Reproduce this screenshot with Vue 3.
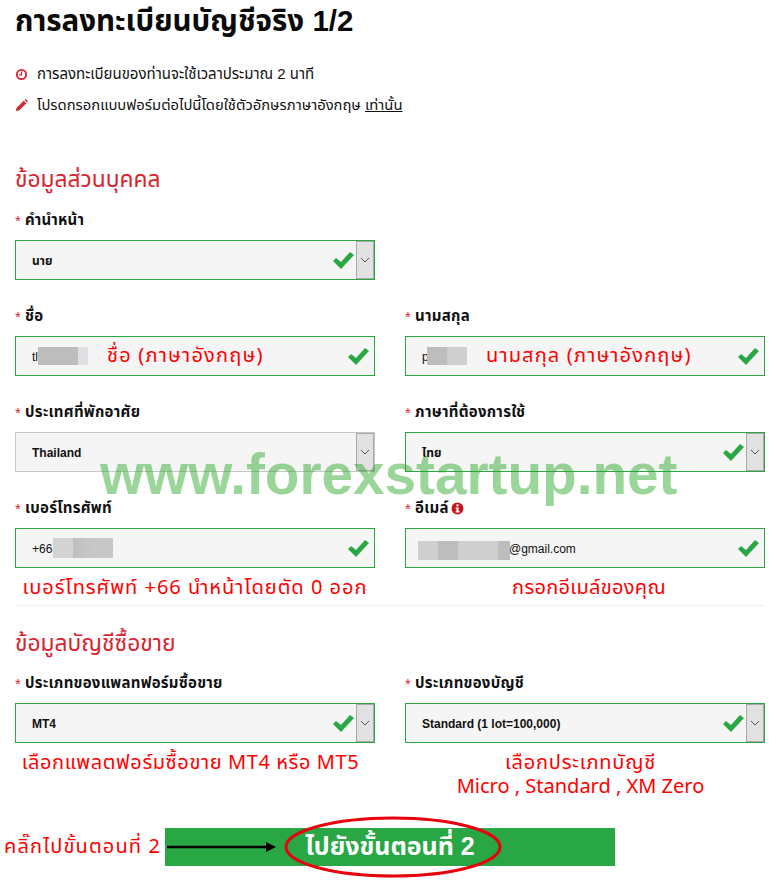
<script setup>
const check = 'M0 10 L3 7 L8 11 L17 1 L21 4 L8 18 Z'
</script>

<template>
  <div class="page">
    <h1 class="title">การลงทะเบียนบัญชีจริง 1/2</h1>

    <ul class="notes">
      <li>
        <svg class="note-icon" viewBox="0 0 14 14"><circle cx="7" cy="7" r="5" fill="none" stroke="#d9232e" stroke-width="2"/><path d="M7 3.8V7.4H4.4" fill="none" stroke="#d9232e" stroke-width="1.3"/></svg>
        <span>การลงทะเบียนของท่านจะใช้เวลาประมาณ 2 นาที</span>
      </li>
      <li class="tight">
        <svg class="note-icon" viewBox="0 0 14 14"><path d="M1 13 L1.6 9.6 L9.4 1.8 L12.2 4.6 L4.4 12.4 Z" fill="#d9232e"/><path d="M10.2 1 L11 .4 Q11.6 0 12.2 .5 L13.5 1.8 Q14 2.4 13.5 3 L13 3.8 Z" fill="#d9232e"/></svg>
        <span>โปรดกรอกแบบฟอร์มต่อไปนี้โดยใช้ตัวอักษรภาษาอังกฤษ <u>เท่านั้น</u></span>
      </li>
    </ul>

    <h2 class="section first">ข้อมูลส่วนบุคคล</h2>

    <div class="grid">
      <div class="field">
        <label><i>*</i> คำนำหน้า</label>
        <div class="box ok">
          <span class="val">นาย</span>
          <svg class="tick sel" viewBox="0 0 21 18"><path :d="check" fill="#2aa745"/></svg>
          <span class="arrow"><svg viewBox="0 0 10 6"><path d="M1 1 L5 5 L9 1" fill="none" stroke="#555" stroke-width="1"/></svg></span>
        </div>
      </div>
      <div></div>

      <div class="field">
        <label><i>*</i> ชื่อ</label>
        <div class="box ok">
          <span class="val plain">tl</span>
          <span class="blur b-first"></span>
          <span class="hint in-first">ชื่อ (ภาษาอังกฤษ)</span>
          <svg class="tick" viewBox="0 0 21 18"><path :d="check" fill="#2aa745"/></svg>
        </div>
      </div>
      <div class="field">
        <label><i>*</i> นามสกุล</label>
        <div class="box ok">
          <span class="val plain">p</span>
          <span class="blur b-last"></span>
          <span class="hint in-last">นามสกุล (ภาษาอังกฤษ)</span>
          <svg class="tick" viewBox="0 0 21 18"><path :d="check" fill="#2aa745"/></svg>
        </div>
      </div>

      <div class="field">
        <label><i>*</i> ประเทศที่พักอาศัย</label>
        <div class="box grey">
          <span class="val">Thailand</span>
          <span class="arrow"><svg viewBox="0 0 10 6"><path d="M1 1 L5 5 L9 1" fill="none" stroke="#555" stroke-width="1"/></svg></span>
        </div>
      </div>
      <div class="field">
        <label><i>*</i> ภาษาที่ต้องการใช้</label>
        <div class="box ok">
          <span class="val">ไทย</span>
          <svg class="tick sel" viewBox="0 0 21 18"><path :d="check" fill="#2aa745"/></svg>
          <span class="arrow"><svg viewBox="0 0 10 6"><path d="M1 1 L5 5 L9 1" fill="none" stroke="#555" stroke-width="1"/></svg></span>
        </div>
      </div>

      <div class="field">
        <label><i>*</i> เบอร์โทรศัพท์</label>
        <div class="box ok">
          <span class="val plain">+66</span>
          <span class="blur b-phone"></span>
          <svg class="tick" viewBox="0 0 21 18"><path :d="check" fill="#2aa745"/></svg>
        </div>
        <p class="hint below wide">เบอร์โทรศัพท์ +66 นำหน้าโดยตัด 0 ออก</p>
      </div>
      <div class="field">
        <label><i>*</i> อีเมล์ <svg class="info" viewBox="0 0 12 12"><circle cx="6" cy="6" r="5.5" fill="#c4161c"/><rect x="5" y="2.2" width="2" height="1.8" fill="#fff"/><path d="M4.2 5H7V8.6H8V9.8H4.2V8.6H5V6.2H4.2Z" fill="#fff"/></svg></label>
        <div class="box ok">
          <span class="blur b-mail"></span>
          <span class="val plain mail">@gmail.com</span>
          <svg class="tick" viewBox="0 0 21 18"><path :d="check" fill="#2aa745"/></svg>
        </div>
        <p class="hint below slight">กรอกอีเมล์ของคุณ</p>
      </div>
    </div>

    <hr class="rule" />

    <h2 class="section second">ข้อมูลบัญชีซื้อขาย</h2>

    <div class="grid">
      <div class="field">
        <label><i>*</i> ประเภทของแพลทฟอร์มซื้อขาย</label>
        <div class="box ok">
          <span class="val">MT4</span>
          <svg class="tick sel" viewBox="0 0 21 18"><path :d="check" fill="#2aa745"/></svg>
          <span class="arrow"><svg viewBox="0 0 10 6"><path d="M1 1 L5 5 L9 1" fill="none" stroke="#555" stroke-width="1"/></svg></span>
        </div>
        <p class="hint below mid">เลือกแพลตฟอร์มซื้อขาย MT4 หรือ MT5</p>
      </div>
      <div class="field">
        <label><i>*</i> ประเภทของบัญชี</label>
        <div class="box ok">
          <span class="val">Standard (1 lot=100,000)</span>
          <svg class="tick sel" viewBox="0 0 21 18"><path :d="check" fill="#2aa745"/></svg>
          <span class="arrow"><svg viewBox="0 0 10 6"><path d="M1 1 L5 5 L9 1" fill="none" stroke="#555" stroke-width="1"/></svg></span>
        </div>
        <p class="hint below pulled"><span class="spaced">เลือกประเภทบัญชี</span><br />Micro , Standard , XM Zero</p>
      </div>
    </div>

    <div class="cta">
      <span class="cta-note">คลิ๊กไปขั้นตอนที่ 2</span>
      <button class="next" type="button">ไปยังขั้นตอนที่ 2</button>
      <svg class="marks" viewBox="0 0 780 90">
        <path d="M167 29 H268" stroke="#000" stroke-width="2.4"/>
        <path d="M266 24 L276 29 L266 34 Z" fill="#000"/>
        <ellipse cx="393" cy="29" rx="107" ry="29" fill="none" stroke="#e8000d" stroke-width="3"/>
      </svg>
    </div>

    <div class="watermark">www.forexstartup.net</div>
  </div>
</template>

<style scoped>
.page {
  position: relative;
  width: 780px;
  height: 890px;
  box-sizing: border-box;
  padding: 3px 15px 0;
  overflow: hidden;
  background: #fff;
  color: #111;
  font-family: "Liberation Sans", "Noto Sans Thai", "DejaVu Sans", sans-serif;
}
.title {
  margin: 0;
  height: 36px;
  font-size: 29.5px;
  line-height: 36px;
  font-weight: 700;
  color: #0a0a0a;
}
.notes {
  list-style: none;
  margin: 20px 0 0;
  padding: 0;
  font-size: 15px;
}
.notes li {
  display: flex;
  align-items: center;
  gap: 9px;
  height: 31px;
}
.notes li.tight {
  font-size: 14.8px;
}
.note-icon {
  width: 13px;
  height: 13px;
  flex: none;
}
.section {
  margin: 0;
  color: #d9232e;
  font-size: 22.8px;
  font-weight: 400;
  line-height: 28px;
}
.section.first {
  margin: 44px 0 13px;
}
.section.second {
  margin: 23px 0 12px;
}
.grid {
  display: grid;
  grid-template-columns: 360px 360px;
  column-gap: 30px;
}
.field {
  height: 96px;
}
.field label {
  display: flex;
  align-items: center;
  gap: 4px;
  height: 28px;
  margin-bottom: 6px;
  font-size: 15px;
  font-weight: 700;
  letter-spacing: 0.25px;
}
.field label i {
  color: #d9232e;
  font-style: normal;
  font-weight: 400;
}
.info {
  width: 13px;
  height: 13px;
  margin-left: -2px;
}
.box {
  position: relative;
  display: flex;
  align-items: center;
  height: 40px;
  box-sizing: border-box;
  padding: 2px 0 0 16px;
  background: #f5f5f5;
  border: 1px solid #2aa745;
}
.box.grey {
  border-color: #c6c6c6;
}
.val {
  font-size: 12px;
  font-weight: 700;
}
.val.plain {
  font-weight: 400;
  font-size: 12px;
}
.val.mail {
  margin-left: 87px;
}
.tick {
  position: absolute;
  right: 5px;
  top: 10px;
  width: 21px;
  height: 18px;
}
.tick.sel {
  right: 20px;
}
.arrow {
  position: absolute;
  right: 0;
  top: 0;
  bottom: 0;
  width: 16px;
  display: flex;
  align-items: center;
  justify-content: center;
  background: #e1e1e1;
  border: 1px solid #a9a9a9;
}
.arrow svg {
  width: 10px;
  height: 6px;
}
.blur {
  position: absolute;
}
.b-first {
  left: 22px;
  top: 10px;
  width: 50px;
  height: 18px;
  background: linear-gradient(90deg, #bdbdbd 40px, #e0e0e4 40px);
}
.b-last {
  left: 21px;
  top: 10px;
  width: 40px;
  height: 18px;
  background: linear-gradient(90deg, #bdbdbd 20px, #cfcfcf 20px);
}
.b-phone {
  left: 37px;
  top: 9px;
  width: 60px;
  height: 20px;
  background: linear-gradient(90deg, #d3d3d3 20px, #bfbfbf 20px, #c8c8c8 40px);
}
.b-mail {
  left: 12px;
  top: 12px;
  width: 92px;
  height: 19px;
  background: linear-gradient(90deg, #d0cfcf 20px, #bdbdbd 20px, #bdbdbd 40px, #cfcfcf 40px, #cfcfcf 80px, #bdbdbd 80px);
}
.hint {
  color: #f00;
  font-size: 20px;
  font-family: "Noto Sans Thai", "DejaVu Sans", sans-serif;
  line-height: 24px;
}
.in-first {
  position: absolute;
  left: 91px;
  top: 7px;
  letter-spacing: 1.2px;
}
.in-last {
  position: absolute;
  left: 80px;
  top: 7px;
  letter-spacing: 1.15px;
}
.below {
  margin: 8px 0 0;
  text-align: center;
}
.wide {
  letter-spacing: 1px;
}
.mid {
  letter-spacing: 0.6px;
  padding-right: 9px;
}
.slight {
  letter-spacing: 0.3px;
  padding-left: 8px;
}
.pulled {
  padding-right: 9px;
}
.spaced {
  letter-spacing: 0.8px;
}
.rule {
  margin: 15px 0 0;
  border: 0;
  border-top: 1px solid #eee;
}
.cta {
  position: absolute;
  left: 0;
  top: 799px;
  width: 780px;
  height: 90px;
}
.cta-note {
  position: absolute;
  left: 4px;
  top: 36px;
  color: #f00;
  font: 20px/24px "Noto Sans Thai", "DejaVu Sans", sans-serif;
  letter-spacing: 1.15px;
}
.next {
  position: absolute;
  left: 165px;
  top: 29px;
  width: 450px;
  height: 38px;
  border: 0;
  padding: 0;
  background: #2aa745;
  color: #fff;
  font: 700 25px "Liberation Sans", "Noto Sans Thai", sans-serif;
}
.marks {
  position: absolute;
  left: 0;
  top: 19px;
  width: 780px;
  height: 90px;
  overflow: visible;
}
.watermark {
  position: absolute;
  left: 100px;
  top: 443px;
  font: 700 56.7px/64px "Liberation Sans", sans-serif;
  color: rgba(40, 165, 40, 0.47);
  pointer-events: none;
  white-space: nowrap;
}
</style>
